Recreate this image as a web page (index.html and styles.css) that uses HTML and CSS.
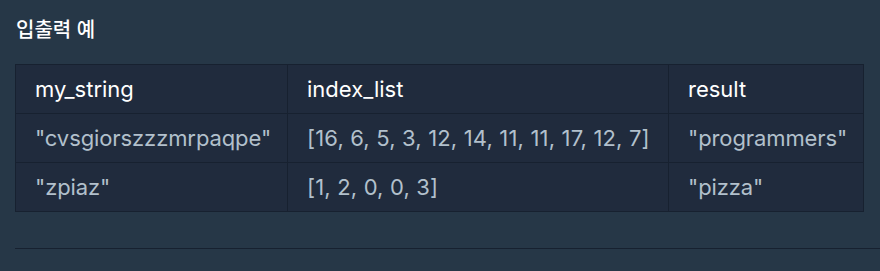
FILE: index.html
```html
<!DOCTYPE html>
<html lang="ko">
<head>
<meta charset="utf-8">
<link rel="stylesheet" href="styles.css">
</head>
<body>
<div class="section">
  <h5 class="title">입출력 예</h5>
  <table class="io-table">
    <thead>
      <tr><th class="c1">my_string</th><th class="c2">index_list</th><th class="c3">result</th></tr>
    </thead>
    <tbody>
      <tr><td>"cvsgiorszzzmrpaqpe"</td><td class="num">[16, 6, 5, 3, 12, 14, 11, 11, 17, 12, 7]</td><td>"programmers"</td></tr>
      <tr><td>"zpiaz"</td><td class="num">[1, 2, 0, 0, 3]</td><td>"pizza"</td></tr>
    </tbody>
  </table>
  <hr class="divider">
</div>
</body>
</html>
```

FILE: styles.css
```css
html, body {
  margin: 0;
  padding: 0;
  background: #263747;
}
body {
  font-family: Inter, "Noto Sans CJK KR", sans-serif;
  color: #fff;
}
.section {
  padding: 15px 0 0 15px;
}
.title {
  margin: 0 0 0 1px;
  font-family: "Noto Sans CJK KR", sans-serif;
  font-size: 20px;
  font-weight: 500;
  line-height: 28px;
  color: #fff;
}
.io-table {
  margin-top: 21px;
  border-collapse: collapse;
  background: #202b3d;
  table-layout: fixed;
  width: 849px;
}
.io-table th, .io-table td {
  border: 1px solid #172130;
  padding: 0 0 0 19px;
  height: 48px;
  text-align: left;
  font-size: 22px;
  line-height: 28px;
  white-space: nowrap;
}
.io-table th {
  font-weight: 400;
  color: #fff;
}
.io-table td {
  color: #b2c0cc;
  letter-spacing: -0.1px;
}
.io-table td.num {
  letter-spacing: 0.17px;
}
.c1 { width: 252px; }
.c2 { width: 361px; }
.c3 { width: 175px; }
.divider {
  margin: 36px 0 0 0;
  border: 0;
  border-top: 1px solid #172130;
  height: 0;
}
```
